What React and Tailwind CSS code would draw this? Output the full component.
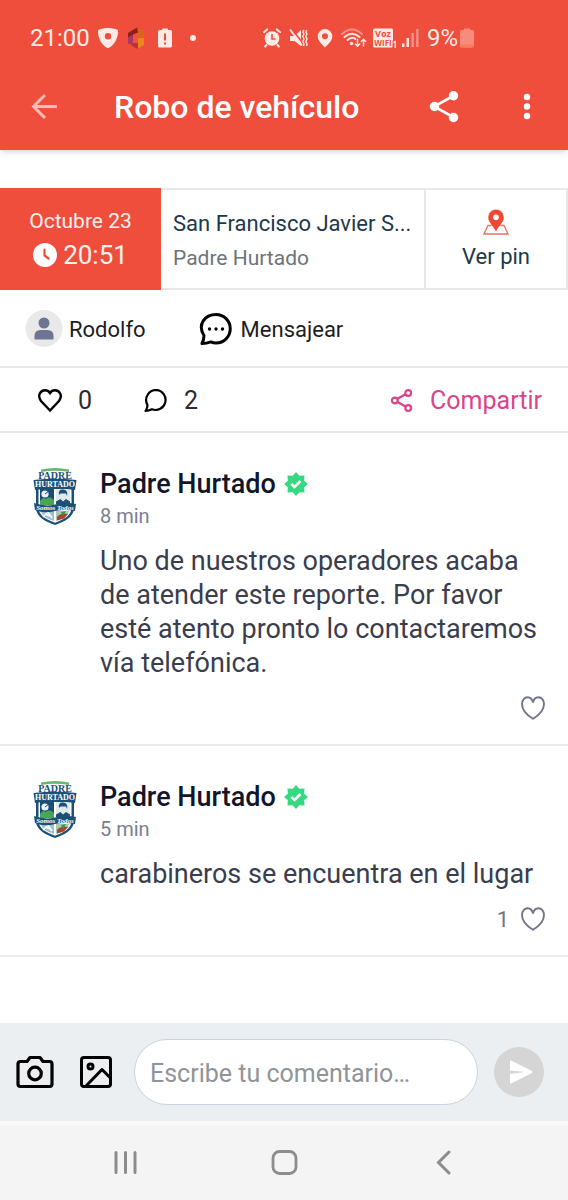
import { useState } from 'react';

const comments = [
  {
    id: 1,
    author: 'Padre Hurtado',
    time: '8 min',
    text: 'Uno de nuestros operadores acaba de atender este reporte. Por favor esté atento pronto lo contactaremos vía telefónica.',
    likes: 0,
  },
  {
    id: 2,
    author: 'Padre Hurtado',
    time: '5 min',
    text: 'carabineros se encuentra en el lugar',
    likes: 1,
  },
];

const StatusBar = () => (
  <div className="flex h-[76px] items-center pl-[30px] pr-[94px] text-[#ffeae6]">
    <div className="flex items-center">
      <span className="text-2xl">21:00</span>
      <svg className="ml-2 h-5 w-5" viewBox="0 0 20 20" fill="currentColor">
        <path
          fillRule="evenodd"
          d="M10 0C7 0 3 .6 1 1.6C0 2.2 0 3 0 4C.2 11 4 17 8.600 19.600C9.600 20.200 10.400 20.200 11.400 19.600C16 17 19.800 11 20 4C20 3 20 2.200 19 1.600C17 .6 13 0 10 0ZM10 5a3.200 3.200 0 1 1 0 6.400A3.200 3.200 0 0 1 10 5Z"
        />
      </svg>
      <svg className="ml-2.5 h-[22px] w-4" viewBox="0 0 16 22">
        <path d="M4.500 7L10 5.300V17.500L4.500 15Z" fill="#f05241" />
        <path d="M0 6L9 .5L12 2L10 5.500L5 7.500V15L2 17L0 16Z" fill="#8f1f1c" />
        <path d="M0 10L5 8V15L2 17L0 16Z" fill="#a63a63" />
        <path d="M9 .5L16 3.500V11H10V5.500Z" fill="#d9641a" />
        <path d="M10 11H16V18L10 21.500Z" fill="#e8871c" />
        <path d="M2 17L5 16H10V21.500L8 21.500Z" fill="#b8323f" />
      </svg>
      <svg className="ml-3.5 h-5 w-3.5" viewBox="0 0 14 20" fill="currentColor">
        <path d="M4 2V1.500Q4 .5 5 .5H9Q10 .5 10 1.500V2H12.500Q14 2 14 3.500V18Q14 19.500 12.500 19.500H1.500Q0 19.500 0 18V3.500Q0 2 1.500 2Z" />
        <path d="M6 5.500H8V12.500H6ZM6 14.500H8V16.500H6Z" fill="#ef4e3d" />
      </svg>
      <span className="ml-[18px] h-1.5 w-1.5 rounded-full bg-[#ffeae6]" />
    </div>

    <div className="ml-auto flex items-center">
      {/* Alarm */}
      <svg className="h-5 w-[18px]" viewBox="0 0 18 20" fill="none" stroke="currentColor" strokeLinecap="round">
        <circle cx="9" cy="10.500" r="7.300" fill="currentColor" stroke="none" />
        <path d="M1 4.200L4.200 1.400M17 4.200L13.800 1.400M3.500 17L2.200 18.500M14.500 17L15.800 18.500" strokeWidth="2" />
        <path d="M9 6.500V11H12" stroke="#ef4e3d" strokeWidth="1.600" />
      </svg>
      {/* Muted, vibrating */}
      <svg className="ml-2 h-5 w-5" viewBox="0 0 20 20" fill="none" stroke="currentColor">
        <path d="M1 8H5.500L12 2V18L5.500 13H1Z" fill="currentColor" stroke="none" />
        <path d="M2.500 .5L14 15.500" stroke="#ef4e3d" strokeWidth="1.600" />
        <path d="M1 1.500L13 17.500" strokeWidth="1.800" />
        <path d="M15 2L13.800 4L15 6L13.800 8.500L15 11L13.800 13.500L15 16L14.500 18M18 2L16.800 4L18 6L16.800 8.500L18 11L16.800 13.500L18 16L17.500 18" strokeWidth="1.400" />
      </svg>
      <svg className="ml-2 h-5 w-4" viewBox="0 0 16 20" fill="currentColor">
        <path fillRule="evenodd" d="M8 1a7.300 7.300 0 0 1 7.300 7.300C15.300 13 11 16.500 8 19.500C5 16.500 .7 13 .7 8.300A7.300 7.300 0 0 1 8 1ZM8 5.300a3 3 0 1 0 0 6a3 3 0 0 0 0-6Z" />
      </svg>
      {/* Wi-Fi with traffic arrows */}
      <svg className="ml-2 h-5 w-[26px]" viewBox="0 0 26 20" fill="none" stroke="currentColor" strokeLinecap="round">
        <path d="M1 6Q11 -3 21 6" strokeWidth="2" opacity=".45" />
        <path d="M3.500 9Q11 2.500 18.500 9" strokeWidth="2" />
        <path d="M6.500 12Q11 8 14.500 11" strokeWidth="2" />
        <circle cx="10.500" cy="15.500" r="1.700" fill="currentColor" stroke="none" />
        <path d="M16.500 11.500V18M14.300 16L16.500 18.300L18.700 16M22.500 18V11.500M20.300 13.500L22.500 11.300L24.700 13.500" strokeWidth="1.400" />
      </svg>
      <svg className="ml-1.5 h-5 w-6" viewBox="0 0 24 20">
        <rect x="0" y="0.500" width="20" height="19" rx="1.500" fill="currentColor" />
        <text x="10" y="9" textAnchor="middle" className="font-['Open_Sans',sans-serif] text-[9px] font-bold" fill="#ef4e3d">Voz</text>
        <text x="10" y="17.500" textAnchor="middle" className="font-['Open_Sans',sans-serif] text-[8px] font-bold" fill="#ef4e3d">WIFI</text>
        <path d="M19.500 12.500H24V20H19.500Z" fill="#ef4e3d" />
        <path d="M20.500 14.500L22.200 13.500V20" fill="none" stroke="currentColor" strokeWidth="1.300" />
      </svg>
      <svg className="ml-1 h-5 w-[18px]" viewBox="0 0 18 20" fill="currentColor">
        <path d="M1 15.500H3.500V19H1ZM5.500 10H8V19H5.500Z" />
        <path d="M10.500 5H12.800V19H10.500ZM15.200 1H17.500V19H15.200Z" opacity=".45" />
      </svg>
      <span className="ml-2 text-2xl">9%</span>
      <svg className="ml-0.5 h-5 w-3.5" viewBox="0 0 14 20">
        <path d="M4 2V0.500H10V2H12Q14 2 14 4V17.500Q14 19.500 12 19.500H2Q0 19.500 0 17.500V4Q0 2 2 2Z" fill="#f78c7d" />
        <path d="M0 16.500H14V17.500Q14 19.500 12 19.500H2Q0 19.500 0 17.500Z" fill="#fb7c5b" />
      </svg>
    </div>
  </div>
);

const AppBar = () => (
  <div className="flex h-[74px] items-center pr-[34px] pb-3 pl-[30px]">
    <button aria-label="Volver" className="text-[#ffbdb3]">
      <svg className="h-7 w-7" viewBox="0 0 28 28" fill="none" stroke="currentColor" strokeWidth="2.900">
        <path d="M27 13.500H4M15 2L3.500 13.500L15 25" />
      </svg>
    </button>
    <h1 className="ml-14 flex-1 truncate text-[32px] leading-10 font-medium text-white">Robo de vehículo</h1>
    <button aria-label="Compartir reporte" className="text-white">
      <svg className="h-8 w-8" viewBox="0 0 32 32" fill="currentColor">
        <path d="M26 4.500L6 15.500L26 26.500" fill="none" stroke="currentColor" strokeWidth="2.600" />
        <circle cx="25.500" cy="4.700" r="4.700" />
        <circle cx="6.500" cy="15.500" r="4.700" />
        <circle cx="25.500" cy="26.500" r="4.700" />
      </svg>
    </button>
    <button aria-label="Más opciones" className="ml-[60px] text-white">
      <svg className="h-7 w-3.5" viewBox="0 0 14 28" fill="currentColor">
        <circle cx="7" cy="4" r="3.200" />
        <circle cx="7" cy="13.500" r="3.200" />
        <circle cx="7" cy="23" r="3.200" />
      </svg>
    </button>
  </div>
);

const ReportInfo = () => (
  <section className="mt-[38px] flex h-[102px]">
    <div className="flex w-[161px] shrink-0 flex-col items-center justify-center bg-[#ef4e3d] text-[#fff1ee]">
      <span className="text-[21px] leading-8">Octubre 23</span>
      <span className="flex items-center gap-1.5 text-[26px] leading-9">
        <svg className="h-6 w-6" viewBox="0 0 24 24">
          <circle cx="12" cy="12" r="12" fill="#fff" />
          <path d="M11.500 6.500V12.500L15.500 15.500" fill="none" stroke="#ef4e3d" strokeWidth="2.200" strokeLinecap="round" />
        </svg>
        20:51
      </span>
    </div>
    <div className="flex min-w-0 flex-1 flex-col justify-center gap-0.5 border-y-2 border-[#e8e8e8] px-3 pt-1">
      <p className="truncate text-[22px] leading-8 text-[#223849]">San Francisco Javier S...</p>
      <p className="truncate text-[21px] leading-8 text-[#6d7478]">Padre Hurtado</p>
    </div>
    <button className="flex w-[144px] shrink-0 flex-col items-center justify-center gap-1.5 border-2 border-[#e8e8e8] pt-1 text-[22px] leading-8 text-[#223849]">
      <svg className="h-[26px] w-[26px]" viewBox="0 0 26 26">
        <path d="M8.500 16.500H5L1 25H25L21 16.500H17.500" fill="none" stroke="#ef6e60" strokeWidth="1.300" />
        <path
          fillRule="evenodd"
          d="M13 0.500A7.800 7.800 0 0 1 20.800 8.300C20.800 13.500 15.500 17 13 22.500C10.500 17 5.200 13.500 5.200 8.300A7.800 7.800 0 0 1 13 .5ZM13 5.500A2.800 2.800 0 1 0 13 11.100A2.800 2.800 0 0 0 13 5.500Z"
          fill="#ee4935"
        />
      </svg>
      Ver pin
    </button>
  </section>
);

const UserRow = () => (
  <section className="flex h-[78px] items-center border-b-2 border-[#e8e8e8] pt-0.5 pl-[25px] text-[22px] text-[#1d1d1f]">
    <div className="flex items-center gap-1.5">
      <svg className="h-[38px] w-[38px]" viewBox="0 0 38 38">
        <circle cx="19" cy="18.500" r="18.500" fill="#e9e9ea" />
        <circle cx="19" cy="13" r="5.500" fill="#6d7593" />
        <path d="M9.500 29V26Q9.500 20 15.500 20H22.500Q28.500 20 28.500 26V29Q28.500 29.500 28 29.500H10Q9.500 29.500 9.500 29Z" fill="#6d7593" />
      </svg>
      Rodolfo
    </div>
    <button className="ml-[53px] flex items-center gap-2">
      <svg className="h-[34px] w-[34px]" viewBox="0 0 34 34" fill="none" stroke="#000" strokeWidth="3">
        <path d="M5 23.500C-2 12.500 6 2.500 17 2.500A14.200 14.200 0 1 1 17 31C15.500 31 13.500 30.700 12 29.900Q7.500 31.500 3 31.500Q5 27.500 5 23.500Z" strokeLinejoin="round" />
        <g fill="#000" stroke="none">
          <circle cx="10.500" cy="17" r="1.700" />
          <circle cx="17" cy="17" r="1.700" />
          <circle cx="23.500" cy="17" r="1.700" />
        </g>
      </svg>
      Mensajear
    </button>
  </section>
);

const ActionRow = () => (
  <section className="flex h-[65px] items-center border-b-2 border-[#e8e8e8] pt-0.5 pr-[26px] pl-[38px] text-[25px] text-[#2c2c2e]">
    <button aria-label="Me gusta" className="flex items-center gap-4">
      <svg className="h-6 w-6" viewBox="0 0 24 24" fill="none" stroke="#000" strokeWidth="2.400">
        <path d="M12 21.500L3 12C-1 6.500 2.500 1.200 7 1.200C9.500 1.200 11 2.500 12 4C13 2.500 14.500 1.200 17 1.200C21.500 1.200 25 6.500 21 12Z" />
      </svg>
      0
    </button>
    <button aria-label="Comentarios" className="ml-[52px] flex items-center gap-4">
      <svg className="h-6 w-6" viewBox="0 0 24 24" fill="none" stroke="#000" strokeWidth="2.200" strokeLinejoin="round">
        <path d="M3.500 16.300C-.5 8.500 5 1 12.500 1A10 10 0 1 1 8 20.300Q5 21.800 1.500 22Q3.500 19 3.500 16.300Z" />
      </svg>
      2
    </button>
    <button className="ml-auto flex items-center gap-4 text-[#db4489]">
      <svg className="h-6 w-6" viewBox="0 0 24 24" fill="none" stroke="currentColor" strokeWidth="2.200">
        <path d="M7.500 9.800L16 5M7.500 13L16 17.800" />
        <circle cx="4.800" cy="11.500" r="2.900" />
        <circle cx="18.200" cy="4" r="2.900" />
        <circle cx="18.200" cy="19" r="2.900" />
      </svg>
      Compartir
    </button>
  </section>
);

const Crest = () => (
  <svg className="h-[58px] w-[46px] shrink-0" viewBox="0 0 46 58" role="img" aria-label="Escudo de Padre Hurtado">
    <path d="M9 1.500Q23 -1.500 37 1.500V4Q23 1.500 9 4Z" fill="#63b96a" />
    <path d="M4 20H42V40C42 49 32 54 23 57C14 54 4 49 4 40Z" fill="#1c5077" />
    <path d="M6.500 21H39.500V40C39.500 47.500 31 52 23 54.700C15 52 6.500 47.500 6.500 40Z" fill="#fff" />
    <path d="M8 21H22V36H8Z" fill="#194c78" />
    <circle cx="13" cy="26" r="3.600" fill="#e8f2f6" />
    <path d="M13 26L17 23" stroke="#194c78" strokeWidth="1" />
    <path d="M8 33Q11 28 14 31Q17 27 22 32V37H8Z" fill="#4aa655" />
    <path d="M24 21H38V37H24Z" fill="#dfeaef" />
    <path d="M27 27Q26 21 31 21.500Q36.500 22 35 28L34 25.500H28.500Z" fill="#1c5077" />
    <path d="M24 36V33.500L28.500 31L31 33.500L34 31L38 33.500V36Z" fill="#1c5077" />
    <path d="M8.500 43H22V53Q11 50 8.500 43Z" fill="#9cc0d3" />
    <path d="M11 49L16 44L20 50M13 46L18 48" stroke="#fff" strokeWidth="1.500" fill="none" />
    <path d="M24 43H37.500Q35 50 24 53Z" fill="#a7cbb1" />
    <path d="M25 49Q29 44 36 46L32 50.500L25 52.500Z" fill="#a5452e" />
    <path d="M29 44L34 43L31 48Z" fill="#3c934b" />
    <path d="M1.500 12Q23 9.500 44.500 12L43 22Q23 18.500 3 22Z" fill="#1c5077" />
    <path d="M2 35Q13 39 23 36.500Q34 34 44 36L43 43Q33 41 23 43Q12 46 3 42Z" fill="#1c5077" />
    <text x="23" y="11" textAnchor="middle" className="font-['Liberation_Serif',serif] text-[10px] font-bold" fill="#1c5077">PADRE</text>
    <text x="23" y="19" textAnchor="middle" className="font-['Liberation_Serif',serif] text-[8px] font-bold" fill="#fff">HURTADO</text>
    <text x="23" y="42" textAnchor="middle" className="font-['Liberation_Serif',serif] text-[7px] font-bold italic" fill="#fff">Somos Todos</text>
  </svg>
);

const VerifiedBadge = () => (
  <svg className="h-6 w-6" viewBox="0 0 24 24">
    <path d="M12 0L15.300 3.800L20.500 3.500L20.200 8.700L24 12L20.200 15.300L20.500 20.500L15.300 20.200L12 24L8.700 20.200L3.500 20.500L3.800 15.300L0 12L3.800 8.700L3.500 3.500L8.700 3.800Z" fill="#36d982" />
    <path d="M7.300 12L10.500 15L16.500 9" fill="none" stroke="#fff" strokeWidth="2.600" />
  </svg>
);

const Comment = ({ comment }) => (
  <article className="flex items-start gap-[22px] border-b-2 border-[#ebebeb] pt-[35px] pr-[23px] pb-6 pl-8">
    <Crest />
    <div className="min-w-0 flex-1">
      <div className="flex h-8 items-center gap-2">
        <h2 className="text-[27px] leading-8 font-medium text-[#11162b]">{comment.author}</h2>
        <VerifiedBadge />
      </div>
      <p className="mt-1 text-xl leading-6 text-[#7b7f90]">{comment.time}</p>
      <p className="mt-4 text-[27px] leading-[34px] text-[#3a3d4d]">{comment.text}</p>
      <div className="mt-4 flex justify-end">
        <button aria-label="Me gusta" className="flex h-6 items-center gap-3 text-[22px] text-[#70758a]">
          {comment.likes > 0 && comment.likes}
          <svg className="h-6 w-6" viewBox="0 0 24 24" fill="none" stroke="currentColor" strokeWidth="1.900">
            <path d="M12 22.800C6.500 19.500 1 14 1 8C1 4 3.500 1.200 6.500 1.200C9.500 1.200 11.300 3 12 6.500C12.700 3 14.500 1.200 17.500 1.200C20.500 1.200 23 4 23 8C23 14 17.500 19.500 12 22.800Z" />
          </svg>
        </button>
      </div>
    </div>
  </article>
);

const CommentForm = () => {
  const [text, setText] = useState('');

  return (
    <form className="flex h-[98px] items-center bg-[#ebeff2] pr-6 pl-4" onSubmit={(e) => e.preventDefault()}>
      <button type="button" aria-label="Cámara" className="shrink-0">
        <svg className="h-[34px] w-[38px]" viewBox="0 0 38 34" fill="none" stroke="#000" strokeWidth="3.200" strokeLinejoin="round">
          <path d="M4.500 6.500H11L14 2.500H24L27 6.500H33.500Q36 6.500 36 9V29Q36 31.500 33.500 31.500H4.500Q2 31.500 2 29V9Q2 6.500 4.500 6.500Z" />
          <circle cx="19" cy="18.500" r="6.300" />
        </svg>
      </button>
      <button type="button" aria-label="Galería" className="ml-[26px] shrink-0">
        <svg className="h-8 w-8" viewBox="0 0 32 32" fill="none" stroke="#000" strokeWidth="3" strokeLinejoin="round">
          <rect x="1.500" y="1.500" width="29" height="29" rx="2.500" />
          <circle cx="10.500" cy="10.500" r="2.500" />
          <path d="M6 30L22 13.500L30 21.500" />
        </svg>
      </button>
      <input
        type="text"
        aria-label="Comentario"
        placeholder="Escribe tu comentario…"
        value={text}
        onChange={(e) => setText(e.target.value)}
        className="ml-[22px] h-[66px] min-w-0 flex-1 rounded-full border border-[#c8d3de] bg-white px-[15px] pt-0.5 text-[25px] text-[#3a3d4d] placeholder:text-[#8f9498]"
      />
      <button aria-label="Enviar" className="ml-4 flex h-[50px] w-[50px] shrink-0 items-center justify-center rounded-full bg-[#d5d5d5]">
        <svg className="ml-1 h-6 w-6" viewBox="0 0 24 24" fill="#fff">
          <path d="M1 .8Q1 0 2 .4L23 11Q24 12 23 13L2 23.600Q1 24 1 23.200V14L14 12.300V11.700L1 10.500Z" />
        </svg>
      </button>
    </form>
  );
};

const SystemNav = () => (
  <nav className="flex h-[79px] items-center justify-between border-t-4 border-[#f9f9f9] bg-[#f4f4f4] px-[110px] text-[#8c8c8c]">
    <button aria-label="Recientes">
      <svg className="h-7 w-8" viewBox="0 0 32 28" stroke="currentColor" strokeWidth="3" strokeLinecap="round">
        <path d="M6 3.500V23.500M15.500 3.500V23.500M25 3.500V23.500" />
      </svg>
    </button>
    <button aria-label="Inicio">
      <svg className="h-7 w-8" viewBox="0 0 32 28" fill="none" stroke="currentColor" strokeWidth="2.800">
        <rect x="5" y="2.500" width="23" height="22" rx="6.500" />
      </svg>
    </button>
    <button aria-label="Atrás">
      <svg className="h-7 w-8" viewBox="0 0 32 28" fill="none" stroke="currentColor" strokeWidth="3" strokeLinecap="round">
        <path d="M23 3L12.500 13.500L23 24" />
      </svg>
    </button>
  </nav>
);

export default function App() {
  return (
    <div className="flex min-h-screen flex-col bg-white font-[Roboto,sans-serif]">
      <header className="bg-[#ef4e3d] shadow-md">
        <StatusBar />
        <AppBar />
      </header>
      <main className="flex-1">
        <ReportInfo />
        <UserRow />
        <ActionRow />
        {comments.map((comment) => (
          <Comment key={comment.id} comment={comment} />
        ))}
      </main>
      <footer>
        <CommentForm />
        <SystemNav />
      </footer>
    </div>
  );
}
